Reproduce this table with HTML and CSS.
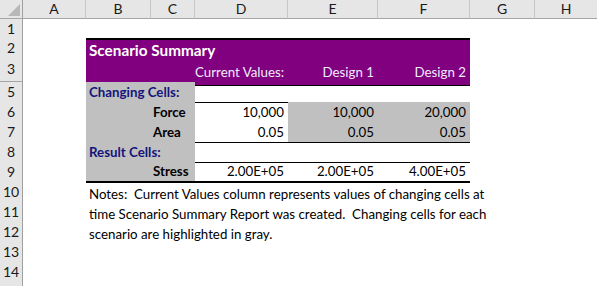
FILE: index.html
```html
<!DOCTYPE html>
<html lang="en">
<head>
<meta charset="utf-8">
<title>Scenario Summary</title>
<link rel="stylesheet" href="styles.css">
</head>
<body>
<div class="sheet">
  <div class="row row-head">
    <div class="corner">
      <svg width="22" height="18" viewBox="0 0 22 18"><polygon points="8,16 20,16 20,4" fill="#b7b7b7"/></svg>
    </div>
    <div class="colh">A</div>
    <div class="colh">B</div>
    <div class="colh">C</div>
    <div class="colh">D</div>
    <div class="colh">E</div>
    <div class="colh">F</div>
    <div class="colh">G</div>
    <div class="colh last">H</div>
  </div>

  <div class="row r1">
    <div class="rh">1</div>
  </div>

  <div class="row r2">
    <div class="rh">2</div>
    <div class="cell span-bf title">Scenario Summary</div>
  </div>

  <div class="row r3">
    <div class="rh">3</div>
    <div class="cell span-bc band"></div>
    <div class="cell col-d band num">Current Values:</div>
    <div class="cell col-e band num">Design 1</div>
    <div class="cell col-f band num">Design 2</div>
  </div>

  <div class="row r4">
    <div class="rh hidden-row"></div>
  </div>

  <div class="row">
    <div class="rh">5</div>
    <div class="cell span-bc gray group line">Changing Cells:</div>
    <div class="cell span-df line"></div>
  </div>

  <div class="row">
    <div class="rh">6</div>
    <div class="cell col-b gray"></div>
    <div class="cell col-c gray label">Force</div>
    <div class="cell col-d num">10,000</div>
    <div class="cell col-e gray num">10,000</div>
    <div class="cell col-f gray num">20,000</div>
  </div>

  <div class="row">
    <div class="rh">7</div>
    <div class="cell col-b gray line"></div>
    <div class="cell col-c gray label line">Area</div>
    <div class="cell col-d num line">0.05</div>
    <div class="cell col-e gray num line">0.05</div>
    <div class="cell col-f gray num line">0.05</div>
  </div>

  <div class="row">
    <div class="rh">8</div>
    <div class="cell span-bc gray group line">Result Cells:</div>
    <div class="cell span-df line"></div>
  </div>

  <div class="row">
    <div class="rh">9</div>
    <div class="cell col-b gray line-thick"></div>
    <div class="cell col-c gray label line-thick">Stress</div>
    <div class="cell col-d num line-thick">2.00E+05</div>
    <div class="cell col-e num line-thick">2.00E+05</div>
    <div class="cell col-f num line-thick">4.00E+05</div>
  </div>

  <div class="row">
    <div class="rh">10</div>
    <div class="cell span-rest note">Notes:&nbsp; Current Values column represents values of changing cells at</div>
  </div>

  <div class="row">
    <div class="rh">11</div>
    <div class="cell span-rest note">time Scenario Summary Report was created.&nbsp; Changing cells for each</div>
  </div>

  <div class="row">
    <div class="rh">12</div>
    <div class="cell span-rest note">scenario are highlighted in gray.</div>
  </div>

  <div class="row">
    <div class="rh">13</div>
  </div>

  <div class="row">
    <div class="rh">14</div>
  </div>

  <div class="row r15">
    <div class="rh"></div>
  </div>
</div>
</body>
</html>
```

FILE: styles.css
```css
:root {
  --cols: 23px 63px 65px 44px 93px 90px 92px 65px 1fr;
  --purple: #800080;
  --fill: #c0c0c0;
  --head-bg: #e6e6e6;
}

html, body {
  margin: 0;
  background: #ffffff;
}

body {
  font-family: Lato, "Open Sans", "Liberation Sans", sans-serif;
  font-size: 13.3px;
  color: #000000;
  overflow: hidden;
}

.sheet {
  display: flex;
  flex-direction: column;
  width: 597px;
}

.row {
  display: grid;
  grid-template-columns: var(--cols);
  height: 20px;
}

.row-head { height: 19px; }
.r1 { height: 19px; }
.r2 { height: 21px; }
.r3 { height: 22px; }
.r4 { height: 1px; }
.r15 { height: 5px; }

/* header strip */
.corner {
  background: var(--head-bg);
  border-right: 1px solid #9f9f9f;
  border-bottom: 1px solid #a5a5a5;
  box-sizing: border-box;
  line-height: 0;
}

.colh {
  background: var(--head-bg);
  border-right: 1px solid #c6c6c6;
  border-bottom: 1px solid #a5a5a5;
  box-sizing: border-box;
  text-align: center;
  line-height: 18px;
  font-size: 14px;
  color: #1a1a1a;
}

.colh.last { border-right: none; }

.rh {
  grid-column: 1;
  background: var(--head-bg);
  border-right: 1px solid #9f9f9f;
  border-bottom: 1px solid #c6c6c6;
  box-sizing: border-box;
  text-align: center;
  line-height: 20px;
  font-size: 14px;
  color: #1a1a1a;
}

.hidden-row {
  background: #a5a5a5;
  border-bottom: none;
}

/* worksheet cells */
.cell {
  box-sizing: border-box;
  line-height: 20px;
  white-space: nowrap;
  overflow: visible;
}

.col-b { grid-column: 3; }
.col-c { grid-column: 4; }
.col-d { grid-column: 5; }
.col-e { grid-column: 6; }
.col-f { grid-column: 7; }
.span-bc { grid-column: 3 / 5; }
.span-df { grid-column: 5 / 8; }
.span-bf { grid-column: 3 / 8; }
.span-rest { grid-column: 3 / -1; }

.title {
  background: var(--purple);
  border-top: 2px solid #000000;
  color: #ffffff;
  font-weight: 700;
  font-size: 15.3px;
  padding-left: 3px;
  line-height: 21px;
}

.band {
  background: var(--purple);
  color: #f0ecff;
  border-bottom: 1px solid #000000;
  line-height: 26px;
}

.num {
  text-align: right;
  padding-right: 4px;
}

.gray { background: var(--fill); }

.group {
  color: #14147c;
  font-weight: 700;
  padding-left: 3px;
}

.label {
  font-weight: 700;
  padding-left: 2px;
}

.line { border-bottom: 1px solid #000000; }
.line-thick { border-bottom: 2px solid #000000; line-height: 19px; }

.note {
  padding-left: 3px;
  line-height: 24px;
}
```
